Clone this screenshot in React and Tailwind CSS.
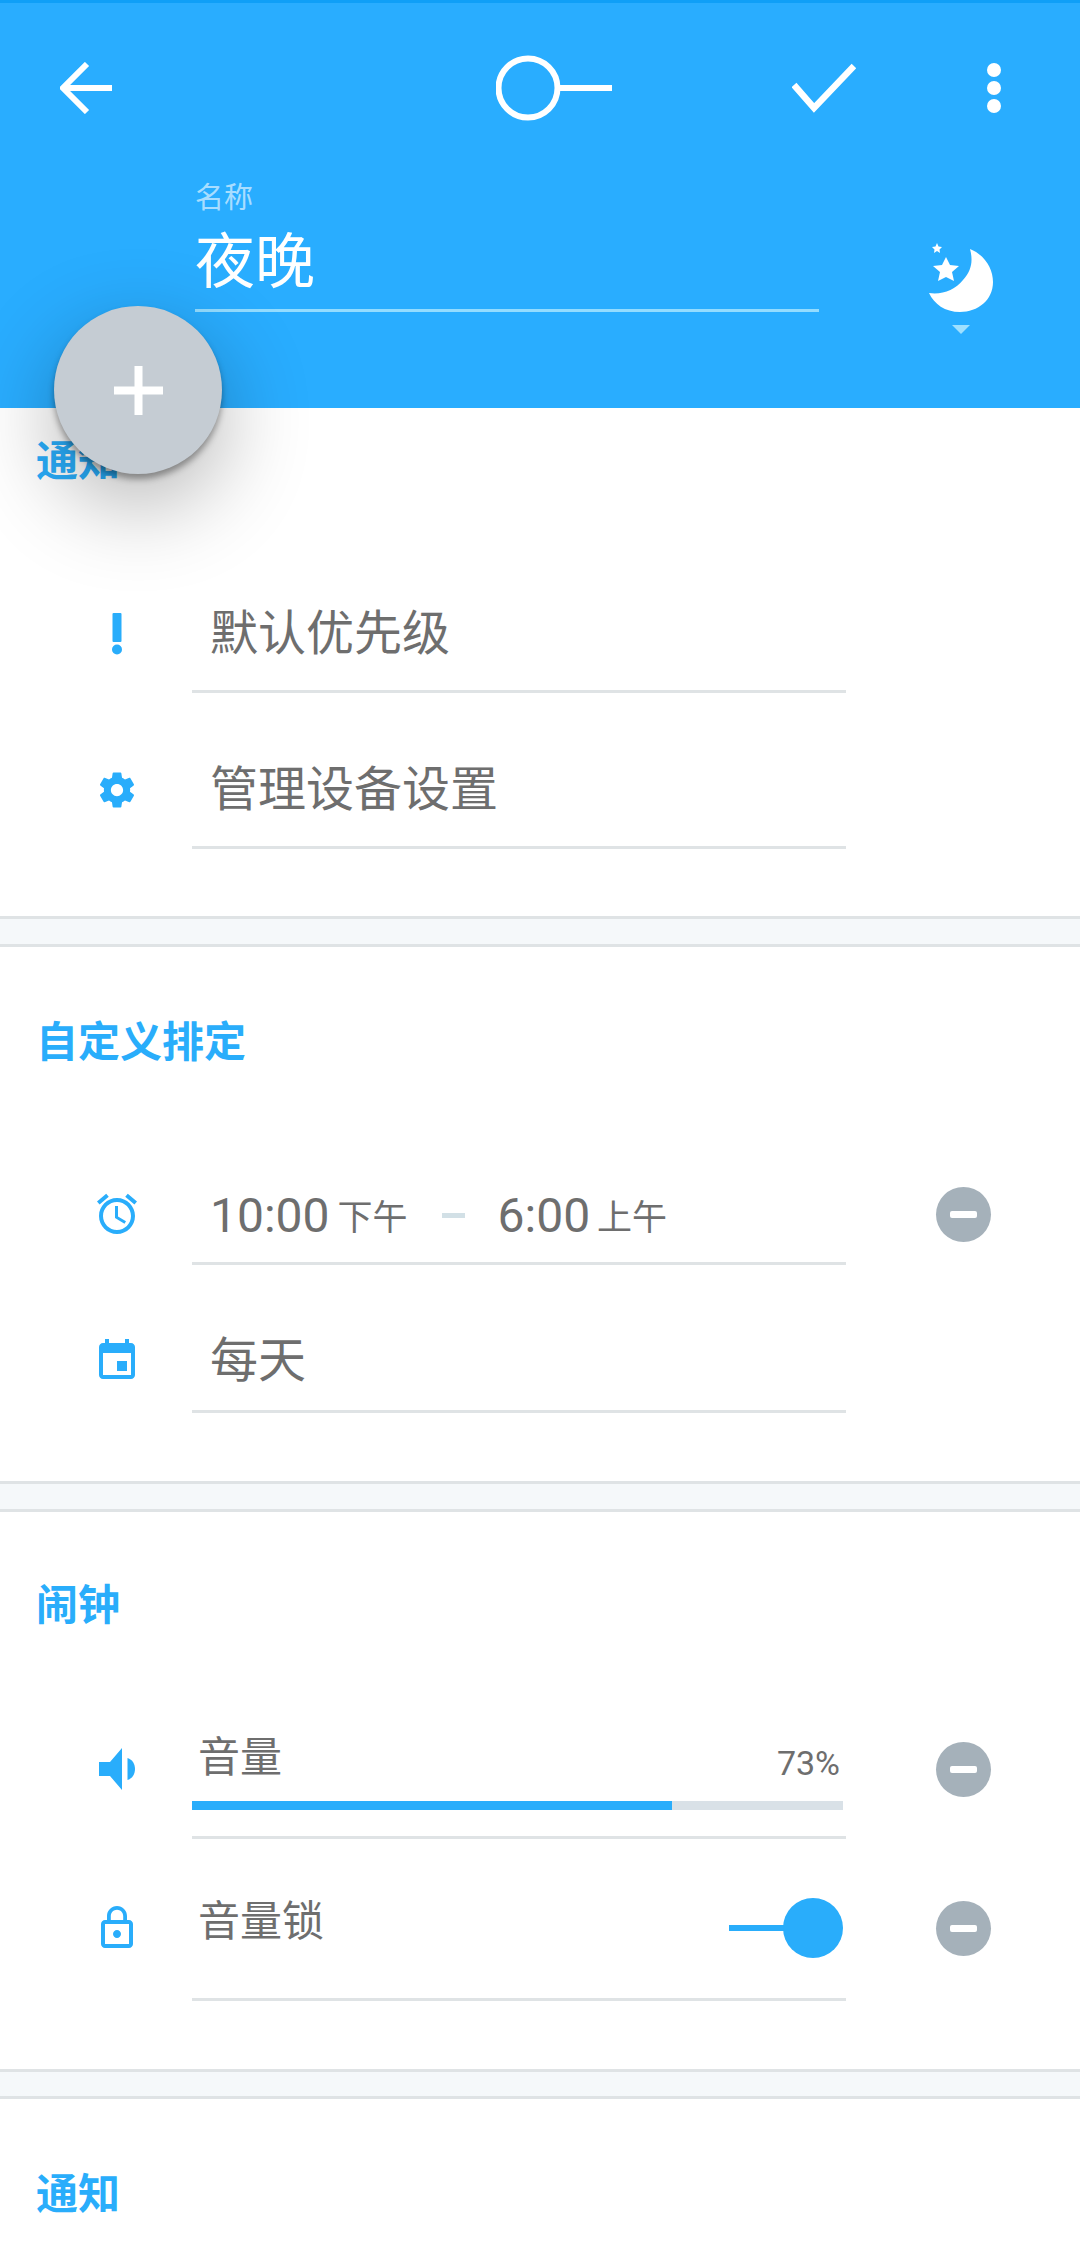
import React from "react";

function Minus() {
  return (
    <div className="w-[55px] h-[55px] rounded-full bg-[#a5b1ba] flex items-center justify-center">
      <div className="w-[27px] h-[7px] rounded-[2px] bg-white" />
    </div>
  );
}

function Mat({ d, size = 48 }) {
  return (
    <svg width={size} height={size} viewBox="0 0 24 24" fill="#29adfb">
      <path d={d} />
    </svg>
  );
}

function Speaker() {
  return (
    <svg width="48" height="48" viewBox="0 0 48 48" fill="#29adfb">
      <path d="M6 17h11L29 3v42L17 31H6z" />
      <path d="M34.500 13c5 1.500 7.500 6 7.500 11s-2.500 9.500-7.500 11z" />
    </svg>
  );
}

function Exclaim() {
  return (
    <svg width="48" height="48" viewBox="0 0 48 48" fill="#29adfb">
      <rect x="19.500" y="3" width="9" height="29" rx="1" />
      <circle cx="24" cy="39.500" r="5" />
    </svg>
  );
}

function Row({ icon, right, className, iconH, contentClass, children }) {
  return (
    <div className={"flex items-start " + className}>
      <div className={"w-[192px] shrink-0 flex items-center justify-center pl-[42px] " + iconH}>{icon}</div>
      <div className={"w-[654px] h-full shrink-0 border-b-[3px] border-[#dfe3e5] " + contentClass}>{children}</div>
      <div className={"flex-1 flex items-center justify-center " + iconH}>{right}</div>
    </div>
  );
}

function Title({ className, children }) {
  return (
    <div className={"pl-[36px] text-[42px] leading-[48px] font-bold text-[#29adfb] " + className}>{children}</div>
  );
}

function Divider({ className }) {
  return <div className={"bg-[#f5f8fa] border-y-[3px] border-[#dfe3e5] " + className} />;
}

const rowText = "text-[48px] leading-[54px] text-[#6e6e6e]";
const timeText = "text-[48px] leading-[54px] text-[#6e6e6e]";
const ampmText = "text-[35px] leading-[54px] text-[#6e6e6e] relative top-[3px]";

export default function App() {
  return (
    <div className="relative w-[1080px] h-[2268px] overflow-hidden bg-white font-['Roboto','Noto_Sans_CJK_SC',sans-serif]">
      {/* header */}
      <div className="h-[408px] bg-[#29adff] border-t-[3px] border-[#0f9ff7]">
        <div className="h-[170px] flex items-center pl-[60px]">
          <svg width="52" height="52" viewBox="0 0 52 52" fill="none" stroke="#fff" strokeWidth="6">
            <path d="M52 26H4M27 2L3 26l24 24" />
          </svg>
          <svg className="ml-[384px]" width="116" height="66" viewBox="0 0 116 66" fill="none" stroke="#fff" strokeWidth="6">
            <circle cx="32" cy="33" r="29.500" />
            <path d="M62 33h54" />
          </svg>
          <svg className="ml-[180px]" width="64" height="50" viewBox="0 0 64 50" fill="none" stroke="#fff" strokeWidth="6.500">
            <path d="M2 22l20 23L62 3" />
          </svg>
          <div className="ml-[131px] flex flex-col gap-[4px]">
            <div className="w-[14px] h-[14px] rounded-full bg-white" />
            <div className="w-[14px] h-[14px] rounded-full bg-white" />
            <div className="w-[14px] h-[14px] rounded-full bg-white" />
          </div>
        </div>
        <div className="flex pl-[195px]">
          <div className="w-[624px] pt-[3px]">
            <div className="text-[29px] leading-[44px] text-white/60">名称</div>
            <div className="mt-[7px] text-[60px] leading-[72px] text-white">夜晚</div>
            <div className="mt-[10px] h-[3px] bg-[#93dcff]" />
          </div>
          <svg className="ml-[61px] mt-[47px]" width="140" height="130" viewBox="0 0 140 130">
            <path fill="#fff" d="M90 29C105 35 113 49 113 62 113 80 98 92 80 92 65 92 54 84 49 73 62 75 75 70 83 60 92 50 93 40 90 29Z" />
            <path fill="#fff" d="M66 37l4 8 9 1-7 6 2 9-8-4-8 4 2-9-7-6 9-1zM57 23l1.500 3.500 3.500.5-2.500 2.500.5 3.500-3-2-3 2 .5-3.500-2.500-2.500 3.500-.5z" />
            <path fill="#9fe0ff" d="M72 105h18l-9 9z" />
          </svg>
        </div>
      </div>

      {/* section 1 */}
      <Title className="pt-[30px]">通知</Title>
      <Row className="mt-[91px] h-[116px]" iconH="h-[113px]" contentClass="flex items-center pl-[18px]" icon={<Exclaim />}>
        <span className={rowText}>默认优先级</span>
      </Row>
      <Row
        className="mt-[40px] h-[116px]"
        iconH="h-[113px]"
        contentClass="flex items-center pl-[18px]"
        icon={<Mat size={42} d="M19.430 12.980c.04-.32.07-.64.07-.98s-.03-.66-.07-.98l2.110-1.650c.19-.15.24-.42.12-.64l-2-3.460c-.12-.22-.39-.3-.61-.22l-2.490 1c-.52-.4-1.080-.73-1.690-.98l-.38-2.650C14.460 2.180 14.250 2 14 2h-4c-.25 0-.46.18-.49.42l-.38 2.650c-.61.25-1.170.59-1.690.98l-2.490-1c-.23-.09-.49 0-.61.22l-2 3.460c-.13.22-.07.49.12.64l2.110 1.650c-.04.32-.07.65-.07.98s.03.66.07.98l-2.110 1.650c-.19.15-.24.42-.12.64l2 3.460c.12.22.39.3.61.22l2.490-1c.52.4 1.080.73 1.690.98l.38 2.650c.03.24.24.42.49.42h4c.25 0 .46-.18.49-.42l.38-2.650c.61-.25 1.170-.59 1.690-.98l2.490 1c.23.09.49 0 .61-.22l2-3.460c.12-.22.07-.49-.12-.64l-2.110-1.650zM12 15.500c-1.930 0-3.500-1.570-3.500-3.500s1.570-3.500 3.500-3.500 3.500 1.570 3.500 3.500-1.570 3.500-3.500 3.500z" />}
      >
        <span className={rowText}>管理设备设置</span>
      </Row>
      <Divider className="mt-[67px] h-[31px]" />

      {/* section 2 */}
      <Title className="pt-[72px]">自定义排定</Title>
      <Row
        className="mt-[102px] h-[96px]"
        iconH="h-[90px]"
        contentClass="flex items-center pl-[18px]"
        icon={<Mat d="M22 5.720l-4.600-3.860-1.290 1.530 4.600 3.860L22 5.720zM7.880 3.390L6.600 1.860 2 5.710l1.290 1.530 4.590-3.850zM12.500 8H11v6l4.750 2.850.75-1.230-4-2.370V8zM12 4c-4.970 0-9 4.030-9 9s4.030 9 9 9 9-4.030 9-9-4.030-9-9-9zm0 16c-3.870 0-7-3.130-7-7s3.130-7 7-7 7 3.130 7 7-3.130 7-7 7z" />}
        right={<Minus />}
      >
        <span className={timeText}>10:00</span>
        <span className={"ml-[8px] " + ampmText}>下午</span>
        <div className="ml-[34px] w-[23px] h-[5px] bg-[#d2e0e6]" />
        <span className={"ml-[33px] " + timeText}>6:00</span>
        <span className={"ml-[7px] " + ampmText}>上午</span>
      </Row>
      <Row
        className="mt-[46px] h-[102px]"
        iconH="h-[99px]"
        contentClass="flex items-center pl-[18px]"
        icon={<Mat d="M17 12h-5v5h5v-5zM16 1v2H8V1H6v2H5c-1.110 0-1.990.9-1.990 2L3 19c0 1.100.89 2 2 2h14c1.100 0 2-.9 2-2V5c0-1.100-.9-2-2-2h-1V1h-2zm3 18H5V8h14v11z" />}
      >
        <span className={rowText}>每天</span>
      </Row>
      <Divider className="mt-[68px] h-[31px]" />

      {/* section 3 */}
      <Title className="pt-[70px]">闹钟</Title>
      <Row className="mt-[101px] h-[108px]" iconH="h-[76px]" icon={<Speaker />} right={<Minus />}>
        <div className="flex items-end justify-between pl-[6px] pr-[3px] w-[651px]">
          <span className="text-[42px] leading-[54px] text-[#6e6e6e]">音量</span>
          <span className="text-[34px] leading-[40px] text-[#6e6e6e] mb-[2px]">73%</span>
        </div>
        <div className="mt-[16px] h-[9px] w-[651px] bg-[#d9e1e7]">
          <div className="h-full bg-[#29adfb] w-[480px]" />
        </div>
      </Row>
      <Row
        className="mt-[32px] h-[130px]"
        iconH="h-[114px]"
        contentClass="flex items-center justify-between pb-[13px] pl-[6px] w-[654px]"
        icon={
          <Mat d="M12 17c1.100 0 2-.9 2-2s-.9-2-2-2-2 .9-2 2 .9 2 2 2zm6-9h-1V6c0-2.760-2.240-5-5-5S7 3.240 7 6v2H6c-1.100 0-2 .9-2 2v10c0 1.100.9 2 2 2h12c1.100 0 2-.9 2-2V10c0-1.100-.9-2-2-2zM8.900 6c0-1.710 1.390-3.100 3.100-3.100s3.100 1.390 3.100 3.100v2H8.900V6zM18 20H6V10h12v10z" />
        }
        right={<Minus />}
      >
        <span className="text-[42px] leading-[54px] text-[#6e6e6e] mb-[12px]">音量锁</span>
        <div className="flex items-center mr-[3px]">
          <div className="w-[60px] h-[6px] bg-[#29adfb]" />
          <div className="w-[60px] h-[60px] rounded-full bg-[#29adfb] ml-[-6px]" />
        </div>
      </Row>
      <Divider className="mt-[68px] h-[30px]" />

      {/* section 4 */}
      <Title className="pt-[72px]">通知</Title>

      {/* floating button */}
      <div className="absolute left-[54px] top-[306px] w-[168px] h-[168px] rounded-full bg-[#c5ccd3] flex items-center justify-center shadow-[0_5px_6px_rgba(0,0,0,0.35),0_30px_90px_rgba(0,0,0,0.3)]">
        <svg width="49" height="49" viewBox="0 0 49 49" fill="#fff">
          <path d="M20.500 0h8v20.500H49v8H28.500V49h-8V28.500H0v-8h20.500z" />
        </svg>
      </div>
    </div>
  );
}
